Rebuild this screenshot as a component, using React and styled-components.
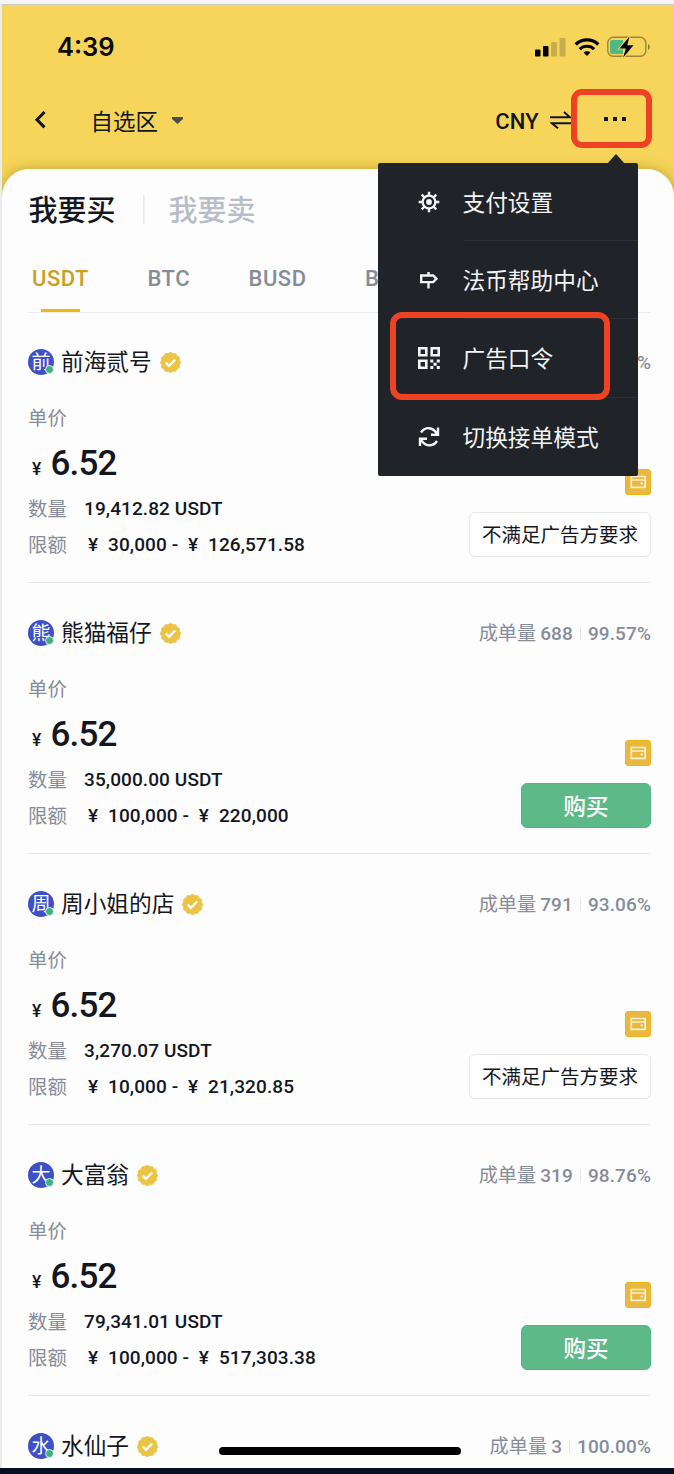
import styled, { createGlobalStyle } from "styled-components";

const GlobalStyle = createGlobalStyle`
  * {
    box-sizing: border-box;
  }

  body {
    margin: 0;
    background: #ebebeb;
    font-family: Roboto, "Noto Sans CJK SC", sans-serif;
    color: #14171f;
  }
`

const Frame = styled.div`
  width: 674px;
  height: 1474px;
  border-top: 4px solid #f5f5f5;
  border-bottom: 6px solid #061024;
  overflow: hidden;
  position: relative;
`

const Screen = styled.div`
  height: 100%;
  margin-left: 2px;
  border-top: 1px solid #cfcdc8;
  background: #f6d55a;
  overflow: hidden;
`

const StatusBar = styled.div`
  display: flex;
  justify-content: space-between;
  align-items: center;
  height: 84px;
  padding: 0 23px 0 55px;
`

const Time = styled.span`
  font: 600 25.5px/30px Inter, sans-serif;
  color: #0b0a04;
`

const StatusIcons = styled.div`
  display: flex;
  align-items: center;
  gap: 7.5px;
`

const NavBar = styled.div`
  display: flex;
  align-items: center;
  height: 64px;
  padding: 0 22px 0 31px;
`

const Zone = styled.div`
  display: flex;
  align-items: center;
  flex: 1;
  margin-left: 43.5px;
  padding-bottom: 2px;
  gap: 14px;
  font-size: 22.5px;
  color: #12161c;
`

const Currency = styled.span`
  margin-right: 11px;
  font-size: 22px;
  font-weight: 500;
  letter-spacing: 0.2px;
  color: #12161c;
`

const MoreButton = styled.div`
  position: relative;
  display: flex;
  justify-content: center;
  align-items: center;
  gap: 5px;
  width: 81px;
  height: 59px;
  margin: 0 0 5px -1px;
  padding-left: 7px;
  border: 6px solid #ef4123;
  border-radius: 11px;
  background: #f6d55a;

  i {
    width: 4px;
    height: 4px;
    background: #12161c;
  }
`

const Menu = styled.div`
  position: absolute;
  z-index: 2;
  top: 68px;
  right: 8px;
  width: 260px;
  height: 313px;
  border-radius: 2px;
  background: #202328;
  color: #f3f4f5;

  &:before {
    position: absolute;
    content: "";
    top: -9px;
    right: 13px;
    border: solid transparent;
    border-width: 0 9.5px 10px;
    border-bottom-color: #202328;
  }
`

const MenuItem = styled.div`
  display: flex;
  align-items: center;
  height: 78.2px;
  padding-left: 39px;
  font-size: 22.7px;

  span {
    flex: 1;
    height: 100%;
    margin-left: 21.5px;
    line-height: 82px;
    border-bottom: 1px solid ${({last}) => last ? 'transparent' : '#2c2f34'};
  }
`

const Highlight = styled.div`
  position: absolute;
  top: 149px;
  left: 12px;
  width: 220px;
  height: 88px;
  border: 6px solid #ef4123;
  border-radius: 12px;
`

const Sheet = styled.div`
  height: 1305px;
  margin-top: 16px;
  padding: 0 23px 0 26px;
  border-radius: 27px 27px 0 0;
  background: #fdfdfe;
  box-shadow: 0 0 14px rgba(130, 100, 0, 0.45);
`

const Sides = styled.div`
  display: flex;
  align-items: center;
  height: 82px;
  padding: 0 0 4px 0.5px;
  font-size: 29px;
  font-weight: 500;
`

const Side = styled.span`
  color: ${({active}) => active ? '#14171f' : '#b9bdc6'};

  & + & {
    margin-left: 27px;
    padding-left: 26px;
    background: linear-gradient(#e8eaed, #e8eaed) left 60% / 1.5px 29px no-repeat;
  }
`

const Tabs = styled.div`
  display: flex;
  height: 62px;
  gap: 58.5px;
  padding-left: 4px;
  border-bottom: 1px solid #e9ebed;
  overflow: hidden;
`

const Tab = styled.span`
  display: flex;
  flex-direction: column;
  align-items: center;
  justify-content: space-between;
  flex: none;
  height: 61px;
  font-size: 22px;
  font-weight: 500;
  line-height: 56px;
  letter-spacing: 0.5px;
  color: ${({active}) => active ? '#cb9f1f' : '#868c98'};

  &:after {
    content: "";
    width: 39px;
    height: 3px;
    background: ${({active}) => active ? '#edb90f' : 'transparent'};
  }
`

const List = styled.div`
  margin-top: -1px;
`

const Row = styled.div`
  height: 271px;
  padding-top: 37px;
  border-bottom: 1px solid #e5e7e9;

  &:last-child {
    height: 70px;
    border-bottom: 0;
  }
`

const RowHead = styled.div`
  display: flex;
  align-items: center;
  height: 26px;
`

const Avatar = styled.span`
  position: relative;
  width: 26px;
  height: 26px;
  border-radius: 50%;
  background: #3f50c4;
  color: #fff;
  font-size: 19px;
  line-height: 28px;
  text-align: center;

  &:after {
    position: absolute;
    content: "";
    right: 0;
    bottom: 1px;
    width: 7px;
    height: 7px;
    border: 1px solid #dfeef0;
    border-radius: 50%;
    background: #3fb27c;
  }
`

const Name = styled.span`
  margin: 2px 8px 0 7px;
  font-size: 22.7px;
  line-height: 26px;
`

const Stats = styled.span`
  display: flex;
  align-items: center;
  margin: 1px 0 0 auto;
  font-size: 19.2px;
  line-height: 26px;
  color: #868c98;

  b {
    margin-left: 4px;
    font-size: 19px;
    font-weight: 500;
    letter-spacing: 0.1px;
  }

  b + b {
    margin-left: 7px;
    padding-left: 8px;
    background: linear-gradient(#e3e5e9, #e3e5e9) left center / 1px 13px no-repeat;
  }
`

const RowBody = styled.div`
  display: flex;
  justify-content: space-between;
  height: 182px;
  padding-top: 29px;
`

const Label = styled.span`
  display: block;
  width: 56px;
  font-size: 19.4px;
  line-height: 30px;
  color: #868c98;
`

const Price = styled.div`
  display: flex;
  align-items: baseline;
  margin: 9px 0 8px 4px;
  height: 40px;
  font-size: 35px;
  font-weight: 500;
  line-height: 41px;
  letter-spacing: -0.8px;

  small {
    margin-right: 10px;
    font-size: 17.5px;
  }
`

const Detail = styled.div`
  display: flex;
  align-items: center;
  height: 36px;
  padding-bottom: 1px;
  font-size: 19px;
  font-weight: 500;
  letter-spacing: 0.1px;
  white-space: pre;

  ${Label} {
    padding-top: 3px;
    font-weight: 400;
    letter-spacing: 0;
  }
`

const Yen = styled.span`
  width: 18px;
  margin-right: 6px;
  text-align: center;

  & ~ & {
    margin-left: 1px;
  }
`

const Action = styled.div`
  display: flex;
  flex-direction: column;
  align-items: flex-end;
  justify-content: flex-end;
  gap: 17px;
`

const Button = styled.div`
  width: ${({buy}) => buy ? 130 : 182}px;
  height: 45px;
  border: 1px solid ${({buy}) => buy ? '#4fb582' : '#e6e8ea'};
  border-radius: 6px;
  background: ${({buy}) => buy ? '#5eb989' : '#fefefe'};
  color: ${({buy}) => buy ? '#fff' : '#14171f'};
  font-size: ${({buy}) => buy ? 22.5 : 19.5}px;
  font-weight: ${({buy}) => buy ? 500 : 400};
  line-height: 46px;
  text-align: center;
`

const HomeBar = styled.div`
  position: absolute;
  left: 219px;
  bottom: 13px;
  width: 242px;
  height: 8px;
  border-radius: 4px;
  background: #000;
`

const Signal = () => (
  <svg width="31" height="20" viewBox="0 0 31 20">
    <rect x="0" y="12.5" width="5.5" height="7" rx="1" />
    <rect x="8" y="9" width="5.5" height="10.5" rx="1" />
    <rect x="16" y="5" width="6" height="14.5" rx="1" fill="#c8ae4a" />
    <rect x="24.5" y="1" width="6" height="18.5" rx="1" fill="#c8ae4a" />
  </svg>
)

const Wifi = () => (
  <svg width="26" height="20" viewBox="0 0 26 20" fill="none" stroke="#000" strokeWidth="3.4">
    <path d="M1.7 7.400a16.300 16.300 0 0 1 22.600 0" />
    <path d="M5.800 12.200a10.300 10.300 0 0 1 14.400 0" strokeWidth="3.200" />
    <path d="M13 19l-3.400-3.400a4.800 4.800 0 0 1 6.800 0z" fill="#000" stroke="none" />
  </svg>
)

const Battery = () => (
  <svg width="44" height="22" viewBox="0 0 44 22">
    <rect x="0.8" y="1.3" width="38" height="19" rx="5.5" fill="none" stroke="#9b8637" strokeWidth="1.4" />
    <path d="M5.5 4h10.5v14h-10.5a2.5 2.5 0 0 1-2.5-2.5v-9a2.5 2.5 0 0 1 2.5-2.5z" fill="#50b883" />
    <path d="M41 8v6c2.2-1 2.2-5 0-6z" fill="#8b782f" />
    <path d="M22.5 0.5L12.5 12.5h6.300l-2.600 9L26.500 9.300h-6.300z" stroke="#f6d55a" strokeWidth="2" paintOrder="stroke" />
  </svg>
)

const Back = () => (
  <svg width="14" height="22" viewBox="0 0 14 22" fill="none" stroke="#12161c" strokeWidth="3">
    <path d="M11.5 2L4 9.7l7.5 7.700" />
  </svg>
)

const Swap = () => (
  <svg width="22" height="20" viewBox="0 0 22 20" stroke="#12161c" strokeWidth="2" fill="none">
    <path d="M0 6.300h20L14 1" />
    <path d="M22 12.300H2l6 5" />
  </svg>
)

// scalloped edge: 12 teeth around the centre
const teeth = Array.from({ length: 24 }, (_, i) => {
  const r = i % 2 ? 9.3 : 10.4
  const a = (i * Math.PI) / 12
  return `${(10.5 + r * Math.sin(a)).toFixed(2)},${(10.5 - r * Math.cos(a)).toFixed(2)}`
}).join(' ')

const Verified = () => (
  <svg width="21" height="21" viewBox="0 0 21 21">
    <polygon points={teeth} fill="#ebc444" stroke="#ebc444" strokeWidth="0.6" strokeLinejoin="round" />
    <path d="M5.800 10.700l3.200 3.200 6.200-6.400" fill="none" stroke="#fff" strokeWidth="2.400" />
  </svg>
)

const PayCard = () => (
  <svg width="26" height="26" viewBox="0 0 26 26">
    <rect x="0.5" y="0.5" width="25" height="25" rx="2.5" fill="#e9b840" stroke="#edb614" />
    <path d="M6.300 7.500h13.900v10.800H6.300zM6.300 11h13.900" fill="none" stroke="#fcf1cc" strokeWidth="1.700" />
    <path d="M15.500 13.500h2.500v1.800h-2.500z" fill="#fcf1cc" />
  </svg>
)

const Gear = () => (
  <svg width="24" height="24" viewBox="0 0 24 24" fill="none" stroke="#f3f4f5" strokeWidth="2.4">
    <circle cx="12" cy="12" r="6.4" />
    <circle cx="12" cy="12" r="2.9" fill="#f3f4f5" stroke="none" />
    <path d="M12 1.700v4M12 18.300v4M1.700 12h4M18.300 12h4M4.700 4.700l2.800 2.800M16.500 16.500l2.800 2.800M4.700 19.300l2.800-2.800M16.500 7.500l2.800-2.800" />
  </svg>
)

const Signpost = () => (
  <svg width="24" height="24" viewBox="0 0 24 24" fill="none" stroke="#f3f4f5" strokeWidth="2.4">
    <path d="M4.200 7.500h12l3.200 3.300-3.200 3.300h-12zM11.500 4v3.500M11.500 14v6.500" />
  </svg>
)

const QrCode = () => (
  <svg width="24" height="24" viewBox="0 0 24 24" fill="none" stroke="#f3f4f5" strokeWidth="2.6">
    <path d="M2.300 2.300h7v7h-7zM14.700 2.300h7v7h-7zM2.300 14.700h7v7h-7z" />
    <path d="M13.300 13.500h3v3h-3zM19.800 13.500h3v3h-3zM16.500 16.700h3.200v3h-3.200zM13.300 20h3v3h-3zM19.800 20h3v3h-3z" fill="#f3f4f5" stroke="none" />
  </svg>
)

const Refresh = () => (
  <svg width="24" height="24" viewBox="0 0 24 24" fill="none" stroke="#f3f4f5" strokeWidth="2.400">
    <path d="M4 7.500C8 1.500 16 1.500 20 9M21 2.500v7.200h-7" />
    <path d="M20 16C16 22 8 22 4 14.500M3 21v-7.200h7" />
  </svg>
)

const menu = [
  { icon: <Gear />, text: '支付设置' },
  { icon: <Signpost />, text: '法币帮助中心' },
  { icon: <QrCode />, text: '广告口令' },
  { icon: <Refresh />, text: '切换接单模式' },
]

const coins = ['USDT', 'BTC', 'BUSD', 'BNB']

const offers = [
  { name: '前海贰号', orders: '702', rate: '98.32%', amount: '19,412.82', min: '30,000', max: '126,571.58' },
  { name: '熊猫福仔', orders: '688', rate: '99.57%', amount: '35,000.00', min: '100,000', max: '220,000', buy: true },
  { name: '周小姐的店', orders: '791', rate: '93.06%', amount: '3,270.07', min: '10,000', max: '21,320.85' },
  { name: '大富翁', orders: '319', rate: '98.76%', amount: '79,341.01', min: '100,000', max: '517,303.38', buy: true },
  { name: '水仙子', orders: '3', rate: '100.00%' },
]

const Offer = ({name, orders, rate, amount, min, max, buy}) => {
  return (
    <Row>
      <RowHead>
        <Avatar>{name[0]}</Avatar>
        <Name>{name}</Name>
        <Verified />
        <Stats>成单量<b>{orders}</b><b>{rate}</b></Stats>
      </RowHead>
      {amount && (
        <RowBody>
          <div>
            <Label>单价</Label>
            <Price><small>¥</small>6.52</Price>
            <Detail><Label>数量</Label>{amount} USDT</Detail>
            <Detail><Label>限额</Label><Yen>¥</Yen>{min} - <Yen>¥</Yen>{max}</Detail>
          </div>
          <Action>
            <PayCard />
            <Button buy={buy}>{buy ? '购买' : '不满足广告方要求'}</Button>
          </Action>
        </RowBody>
      )}
    </Row>
  );
};

export default function App() {
  return (
    <Frame>
      <GlobalStyle />
      <Screen>
        <StatusBar>
          <Time>4:39</Time>
          <StatusIcons>
            <Signal />
            <Wifi />
            <Battery />
          </StatusIcons>
        </StatusBar>
        <NavBar>
          <Back />
          <Zone>
            自选区
            <svg width="11" height="7" viewBox="0 0 11 7"><path d="M0 0h11v2L5.500 7 0 2z" fill="#4c4c47" /></svg>
          </Zone>
          <Currency>CNY</Currency>
          <Swap />
          <MoreButton>
            <i /><i /><i />
            <Menu>
              {menu.map(({icon, text}, i) => (
                <MenuItem key={text} last={i === menu.length - 1}>{icon}<span>{text}</span></MenuItem>
              ))}
              <Highlight />
            </Menu>
          </MoreButton>
        </NavBar>
        <Sheet>
          <Sides>
            <Side active>我要买</Side>
            <Side>我要卖</Side>
          </Sides>
          <Tabs>
            {coins.map((coin, i) => <Tab key={coin} active={i === 0}>{coin}</Tab>)}
          </Tabs>
          <List>
            {offers.map((offer) => <Offer key={offer.name} {...offer} />)}
          </List>
        </Sheet>
      </Screen>
      <HomeBar />
    </Frame>
  );
}
